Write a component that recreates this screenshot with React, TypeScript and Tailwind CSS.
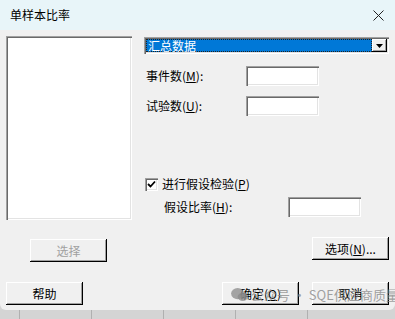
import React from "react";

const font = "font-['SimSun','Noto_Sans_CJK_SC','Noto_Sans',sans-serif]";

const raised =
  "shadow-[inset_-1px_-1px_0_#000,inset_1px_1px_0_#fff,inset_-2px_-2px_0_#a0a0a0]";
const sunken =
  "shadow-[inset_1px_1px_0_#a0a0a0,inset_2px_2px_0_#696969,inset_-1px_-1px_0_#fff,inset_-2px_-2px_0_#e3e3e3]";

function Btn({
  children,
  disabled,
  className = "",
}: {
  children: React.ReactNode;
  disabled?: boolean;
  className?: string;
}) {
  return (
    <div
      className={`flex h-[23px] w-[77px] items-center justify-center bg-[#f0f0f0] text-[12px] ${raised} ${
        disabled ? "text-[#a0a0a0]" : "text-black"
      } ${className}`}
    >
      {children}
    </div>
  );
}

function Field() {
  return <div className={`h-[20px] w-[73px] bg-white ${sunken}`} />;
}

function Mn({ pre, k, post = "" }: { pre: string; k: string; post?: string }) {
  return (
    <span className="whitespace-pre">
      {pre}(<span className="underline">{k}</span>){post}
    </span>
  );
}

export default function App() {
  return (
    <div className={`relative h-[319px] w-[395px] overflow-hidden bg-[#d4d4d4] ${font}`}>
      <div className="flex h-[310px] flex-col overflow-hidden rounded-b-[6px] bg-[#f0f0f0]">
        {/* title bar */}
        <div className="flex h-[30px] items-center justify-between bg-[#e8f5f9] pl-[10px] pr-[11px] text-[12px] text-black">
          <span>单样本比率</span>
          <svg width="11" height="11" viewBox="0 0 11 11">
            <path d="M0.5 0.5 L10.5 10.5 M10.5 0.5 L0.5 10.5" stroke="#222" strokeWidth="1" />
          </svg>
        </div>

        <div className="flex flex-col px-[6px] pt-[6px] text-[12px] text-black">
          <div className="flex">
            {/* left column */}
            <div className="flex w-[126px] flex-col">
              <div className={`h-[184px] w-[126px] bg-white ${sunken}`} />
              <Btn disabled className="ml-[24px] mt-[19px]">
                选择
              </Btn>
            </div>

            {/* right column */}
            <div className="ml-[12px] flex w-[245px] flex-col">
              <div className={`mt-[1px] flex h-[17px] items-center bg-white p-[2px] ${sunken}`}>
                <div className="flex h-full flex-1 items-center border border-dotted border-[#222] bg-[#0078d7] pl-[1px] text-white">
                  汇总数据
                </div>
                <div className={`flex h-full w-[15px] items-center justify-center bg-[#f0f0f0] ${raised}`}>
                  <svg width="7" height="4" viewBox="0 0 7 4">
                    <path d="M0 0 H7 L3.5 4 Z" fill="#000" />
                  </svg>
                </div>
              </div>

              <div className="mt-[12px] flex items-center">
                <span className="w-[102px] pl-[2px]">
                  <Mn pre="事件数" k="M" post=":" />
                </span>
                <Field />
              </div>
              <div className="mt-[10px] flex items-center">
                <span className="w-[102px] pl-[2px]">
                  <Mn pre="试验数" k="U" post=":" />
                </span>
                <Field />
              </div>

              <div className="mt-[59px] flex items-center">
                <div className={`ml-[1px] flex h-[13px] w-[13px] items-center justify-center bg-white ${sunken}`}>
                  <svg width="9" height="9" viewBox="0 0 9 9">
                    <path d="M1 4 L3.5 6.5 L8 1.5" stroke="#000" strokeWidth="1.8" fill="none" />
                  </svg>
                </div>
                <span className="ml-[4px]">
                  <Mn pre="进行假设检验" k="P" />
                </span>
              </div>
              <div className="mt-[4px] flex items-center">
                <span className="w-[144px] pl-[20px]">
                  <Mn pre="假设比率" k="H" post=":" />
                </span>
                <Field />
              </div>

              <Btn className="mt-[20px] self-end">
                <Mn pre="选项" k="N" post="..." />
              </Btn>
            </div>
          </div>

          {/* bottom buttons */}
          <div className="mt-[20px] flex">
            <Btn>帮助</Btn>
            <Btn className="ml-[139px]">
              <Mn pre="确定" k="O" />
            </Btn>
            <Btn className="ml-[13px]">取消</Btn>
          </div>
        </div>
      </div>

      {/* table strip behind the dialog */}
      <div className="flex h-[9px] bg-[#d4d4d4]">
        <div className="w-[20px] border-r border-[#b0b0b0]" />
        <div className="w-[72px] border-r border-[#b0b0b0]" />
        <div className="w-[72px] border-r border-[#b0b0b0]" />
        <div className="w-[72px] border-r border-[#b0b0b0]" />
        <div className="w-[72px] border-r border-[#b0b0b0]" />
      </div>

      {/* watermark overlay */}
      <div className="pointer-events-none absolute left-[231px] top-[287px] z-10 flex items-center gap-[3px] whitespace-nowrap text-[13px] leading-[16px] text-[#8a8a8a]/80">
        <svg width="17" height="14" viewBox="0 0 18 15">
          <ellipse cx="7" cy="6" rx="7" ry="6" fill="#8a8a8a" opacity="0.75" />
          <ellipse cx="12.5" cy="9.5" rx="5.5" ry="4.5" fill="#8a8a8a" opacity="0.75" />
        </svg>
        <span className="font-['Noto_Sans_CJK_SC',sans-serif]">公众号 · SQE供应商质量</span>
      </div>
    </div>
  );
}
